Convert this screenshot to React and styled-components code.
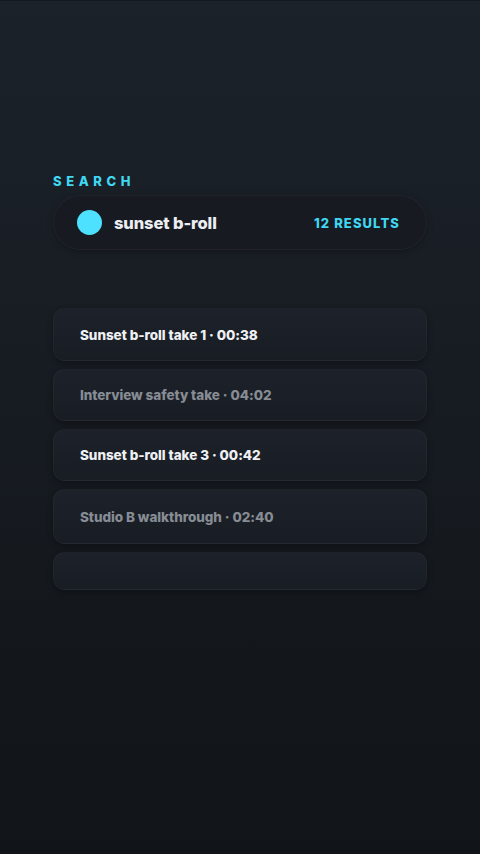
import styled, { createGlobalStyle } from 'styled-components';

const GlobalStyle = createGlobalStyle`
  html, body {
    margin: 0;
    padding: 0;
    height: 100%;
    background: #111418;
  }
  #root {
    min-height: 100vh;
  }
`;

const Page = styled.div`
  min-height: 854px;
  box-sizing: border-box;
  border-top: 1px solid #141920;
  background: linear-gradient(180deg, #1c222a 0%, #171c22 45%, #111418 100%);
  padding: 172px 53px 0;
  font-family: Inter, "Noto Sans", sans-serif;
`;

const Label = styled.div`
  color: #3fd7f2;
  font-size: 13px;
  font-weight: 800;
  letter-spacing: 4.6px;
  line-height: 16px;
  margin-bottom: 6px;
`;

const SearchBar = styled.div`
  display: flex;
  align-items: center;
  height: 55px;
  box-sizing: border-box;
  padding: 0 26px 0 23px;
  border-radius: 28px;
  background: #171b21;
  border: 1px solid rgba(255, 255, 255, 0.04);
  box-shadow: 0 2px 6px rgba(0, 0, 0, 0.25);
`;

const Dot = styled.span`
  width: 25px;
  height: 25px;
  border-radius: 50%;
  background: #4ee0ff;
  flex-shrink: 0;
`;

const Query = styled.span`
  margin-left: 12px;
  flex: 1;
  color: #eceef2;
  font-size: 16.5px;
  font-weight: 800;
  letter-spacing: -0.1px;
`;

const Count = styled.span`
  color: #3fd7f2;
  font-size: 13px;
  font-weight: 800;
  letter-spacing: 1.1px;
`;

const List = styled.div`
  display: flex;
  flex-direction: column;
  gap: 8px;
  margin-top: 58px;
`;

const Item = styled.div`
  display: flex;
  align-items: center;
  height: ${(p) => p.$h}px;
  box-sizing: border-box;
  padding: 0 26px;
  border-radius: 12px;
  background: linear-gradient(180deg, #1d222a 0%, #181c23 100%);
  border: 1px solid rgba(255, 255, 255, 0.03);
  box-shadow: 0 3px 6px rgba(0, 0, 0, 0.3);
  color: ${(p) => (p.$dim ? '#878c94' : '#eef0f4')};
  font-size: 13.5px;
  font-weight: 800;
  letter-spacing: -0.05px;
`;

const results = [
  { text: 'Sunset b-roll take 1 · 00:38', h: 53 },
  { text: 'Interview safety take · 04:02', h: 52, dim: true },
  { text: 'Sunset b-roll take 3 · 00:42', h: 52 },
  { text: 'Studio B walkthrough · 02:40', h: 55, dim: true },
  { text: '', h: 38, dim: true },
];

export default function App() {
  return (
    <>
      <GlobalStyle />
      <Page>
        <Label>SEARCH</Label>
        <SearchBar>
          <Dot />
          <Query>sunset b-roll</Query>
          <Count>12 RESULTS</Count>
        </SearchBar>
        <List>
          {results.map((r, i) => (
            <Item key={i} $h={r.h} $dim={r.dim}>
              {r.text}
            </Item>
          ))}
        </List>
      </Page>
    </>
  );
}
